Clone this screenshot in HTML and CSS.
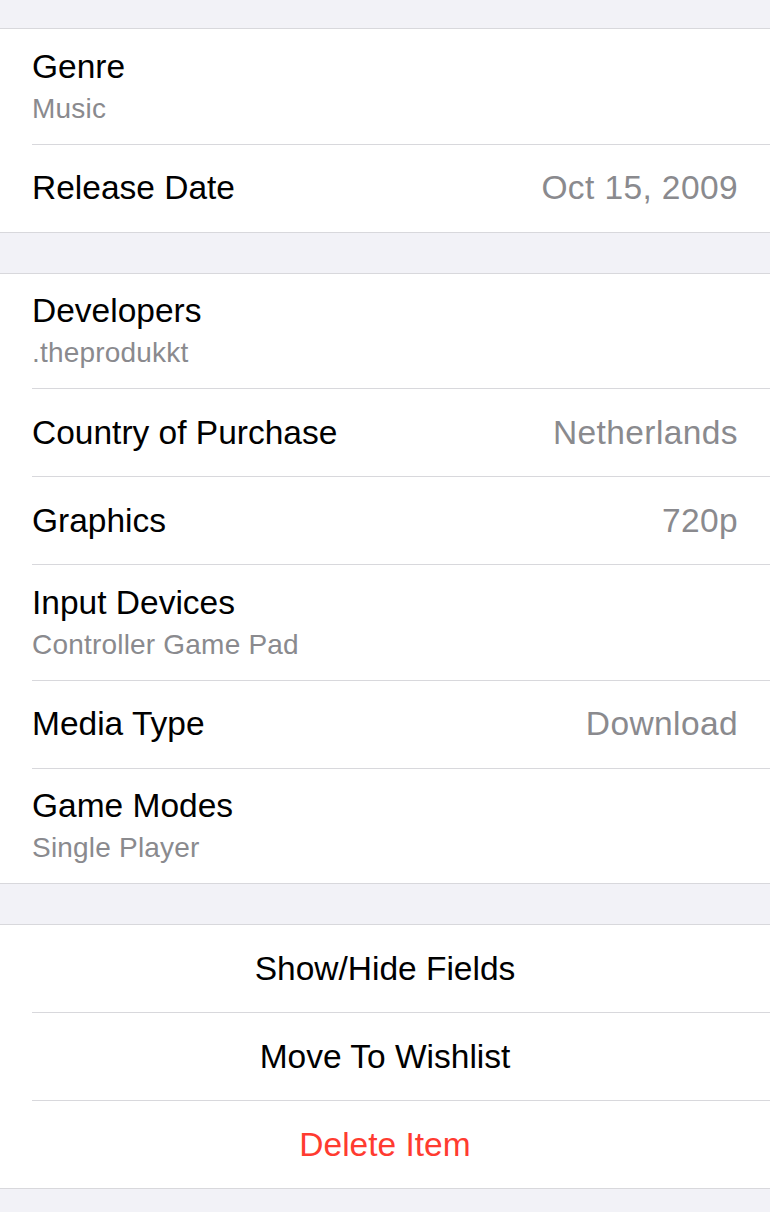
FILE: index.html
```html
<!DOCTYPE html>
<html lang="en">

<head>
    <meta charset="UTF-8">
    <meta name="viewport" content="width=device-width, initial-scale=1.0">
    <title>Item Details</title>

    <link rel="stylesheet" href="styles.css">
</head>

<body>
    <div class="group">
        <div class="row">
            <div class="cell subtitle">
                <div class="title">Genre</div>
                <div class="detail">Music</div>
            </div>
        </div>
        <div class="row">
            <div class="cell">
                <div class="title">Release Date</div>
                <div class="value">Oct 15, 2009</div>
            </div>
        </div>
    </div>

    <div class="group">
        <div class="row">
            <div class="cell subtitle">
                <div class="title">Developers</div>
                <div class="detail">.theprodukkt</div>
            </div>
        </div>
        <div class="row">
            <div class="cell">
                <div class="title">Country of Purchase</div>
                <div class="value">Netherlands</div>
            </div>
        </div>
        <div class="row">
            <div class="cell">
                <div class="title">Graphics</div>
                <div class="value">720p</div>
            </div>
        </div>
        <div class="row">
            <div class="cell subtitle">
                <div class="title">Input Devices</div>
                <div class="detail">Controller Game Pad</div>
            </div>
        </div>
        <div class="row">
            <div class="cell">
                <div class="title">Media Type</div>
                <div class="value">Download</div>
            </div>
        </div>
        <div class="row">
            <div class="cell subtitle">
                <div class="title">Game Modes</div>
                <div class="detail">Single Player</div>
            </div>
        </div>
    </div>

    <div class="group">
        <div class="row">
            <div class="cell action">Show/Hide Fields</div>
        </div>
        <div class="row">
            <div class="cell action">Move To Wishlist</div>
        </div>
        <div class="row">
            <div class="cell action destructive">Delete Item</div>
        </div>
    </div>
</body>

</html>
```

FILE: styles.css
```css
body {
    font-family: "Liberation Sans", Arial, sans-serif;
    background-color: #f2f2f7;
    margin: 0;
    padding: 28px 0 24px;
    display: flex;
    flex-direction: column;
    gap: 40px;
}

.group {
    background-color: #fff;
    border-top: 1px solid #d8d8dc;
    border-bottom: 1px solid #d8d8dc;
}

.row {
    padding-left: 32px;
}

.cell {
    display: flex;
    justify-content: space-between;
    align-items: center;
    height: 87px;
    padding-right: 32px;
    border-bottom: 1px solid #d8d8dc;
}

.row:last-child .cell {
    border-bottom: none;
}

.cell.subtitle {
    flex-direction: column;
    justify-content: center;
    align-items: flex-start;
    height: 114.5px;
    gap: 7px;
}

.title {
    font-size: 33.5px;
    color: #000;
}

.value {
    font-size: 33.5px;
    color: #8a8a8e;
    letter-spacing: 0.4px;
}

.detail {
    font-size: 28px;
    color: #8a8a8e;
    letter-spacing: 0.2px;
}

.action {
    justify-content: center;
    font-size: 33.5px;
    color: #000;
    padding-right: 32px;
}

.destructive {
    color: #ff3b30;
}
```
